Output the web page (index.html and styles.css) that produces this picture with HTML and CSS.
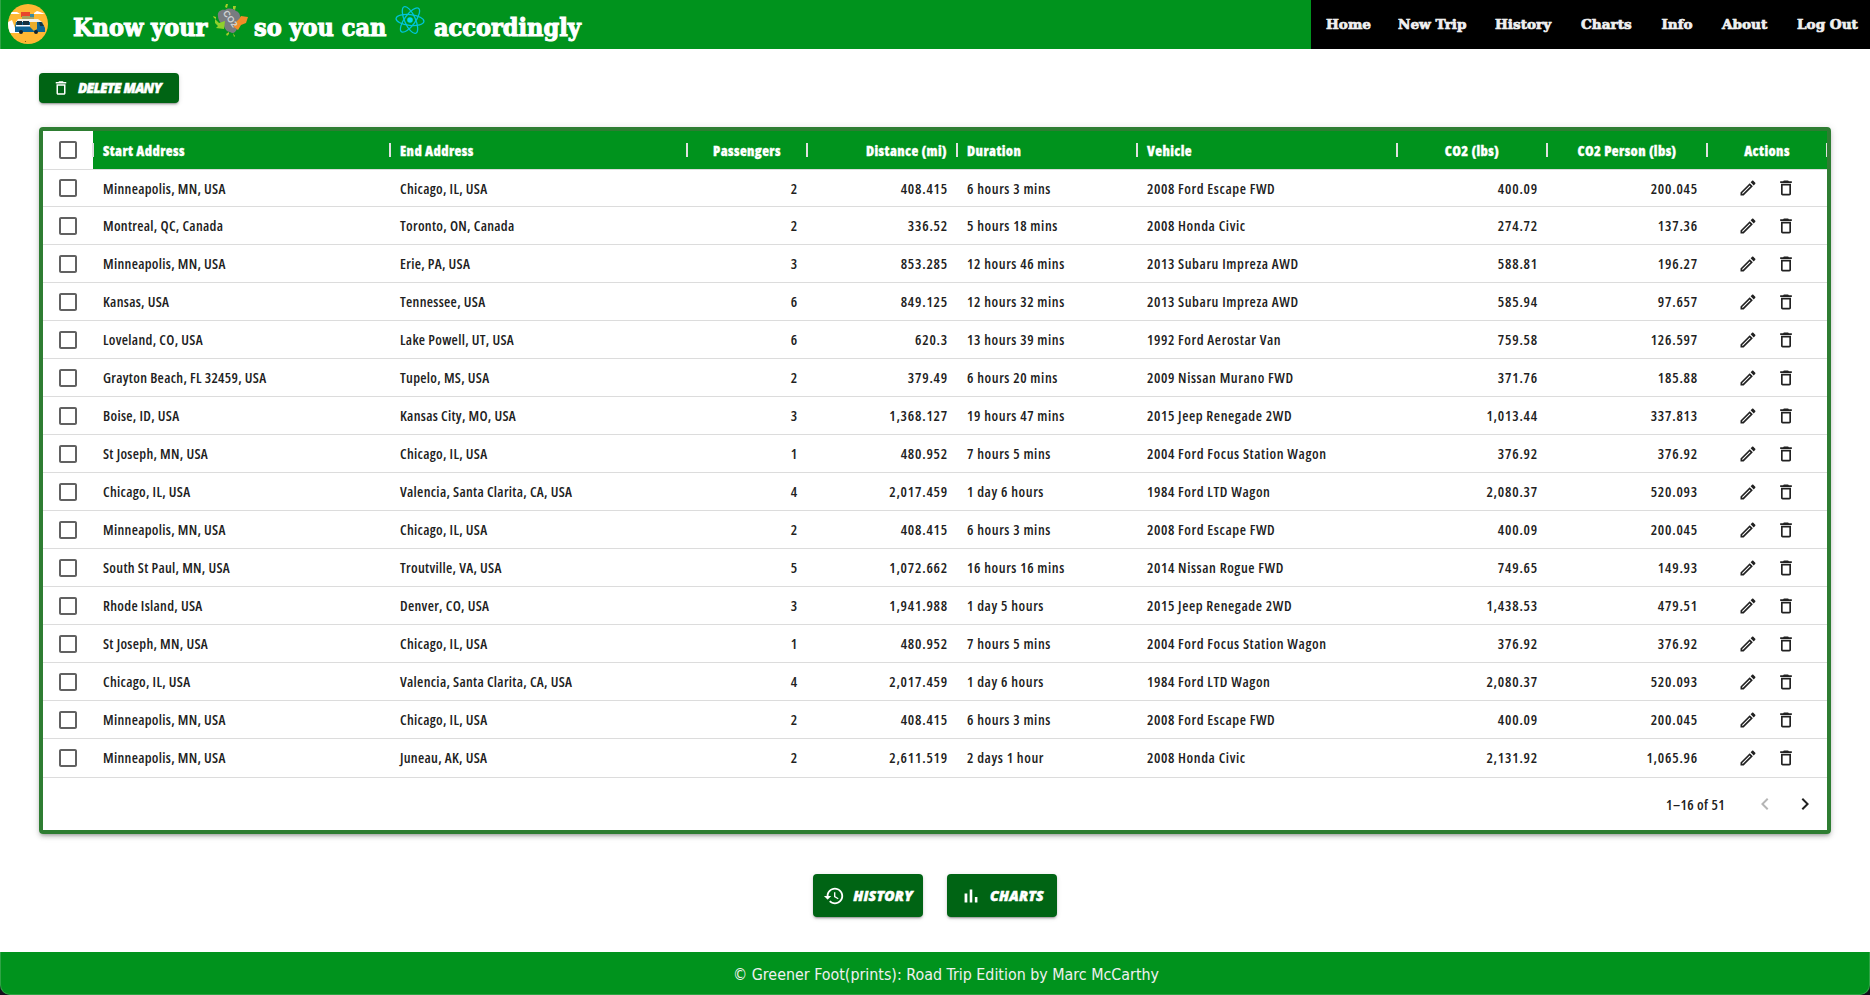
FILE: index.html
```
<!DOCTYPE html>
<html lang="en">
<head>
<meta charset="utf-8">
<title>Greener Foot(prints): Road Trip Edition</title>
<link rel="stylesheet" href="styles.css">
</head>
<body>
<svg class="sprite" aria-hidden="true">
  <symbol id="box" viewBox="0 0 24 24"><path d="M19 5v14H5V5h14m0-2H5c-1.1 0-2 .9-2 2v14c0 1.1.9 2 2 2h14c1.1 0 2-.9 2-2V5c0-1.1-.9-2-2-2z"/></symbol>
  <symbol id="edit" viewBox="0 0 24 24"><path d="M14.06 9.02l.92.92L5.92 19H5v-.92l9.06-9.06M17.66 3c-.25 0-.51.1-.7.29l-1.83 1.83 3.75 3.75 1.83-1.83c.39-.39.39-1.02 0-1.41l-2.34-2.34c-.2-.2-.45-.29-.71-.29zm-3.6 3.19L3 17.25V21h3.75L17.81 9.94l-3.75-3.75z"/></symbol>
  <symbol id="trash" viewBox="0 0 24 24"><path d="M6 19c0 1.1.9 2 2 2h8c1.1 0 2-.9 2-2V7H6v12zM8 9h8v10H8V9zm7.5-5l-1-1h-5l-1 1H5v2h14V4h-3.5z"/></symbol>
  <symbol id="history" viewBox="0 0 24 24"><path d="M13 3c-4.97 0-9 4.03-9 9H1l3.89 3.89.07.14L9 12H6c0-3.87 3.13-7 7-7s7 3.13 7 7-3.13 7-7 7c-1.93 0-3.68-.79-4.94-2.06l-1.42 1.42C8.27 19.99 10.51 21 13 21c4.97 0 9-4.03 9-9s-4.03-9-9-9zm-1 5v5l4.28 2.54.72-1.21-3.5-2.08V8H12z"/></symbol>
  <symbol id="bars" viewBox="0 0 24 24"><path d="M5 9.2h3V19H5zM10.6 5h2.8v14h-2.8zM16.2 13H19v6h-2.8z"/></symbol>
  <symbol id="left" viewBox="0 0 24 24"><path d="M15.41 7.41L14 6l-6 6 6 6 1.41-1.41L10.83 12z"/></symbol>
  <symbol id="right" viewBox="0 0 24 24"><path d="M10 6L8.59 7.41 13.17 12l-4.58 4.59L10 18l6-6z"/></symbol>
</svg>

<header class="topbar">
  <svg class="logo" viewBox="0 0 40 40">
    <defs><clipPath id="round"><circle cx="20" cy="20" r="20"/></clipPath></defs>
    <g clip-path="url(#round)">
      <rect width="40" height="40" fill="#ffb833"/>
      <path d="M0 8h9l3 2H0zM26 9l3-2 3 1 5 2h-11zM0 18l4-2 3 8 5 5H0z" fill="#fff"/>
      <path d="M13 8h9v5h-9z" fill="#e8452c"/>
      <path d="M14 12h12v3H14z" fill="#a8a25c"/>
      <path d="M22 10h4v3h-4z" fill="#3d8aa0"/>
      <path d="M10 15h20l4 3H8z" fill="#f4f1e8"/>
      <path d="M8 18h26l3 6v4H7v-5z" fill="#0d6394"/>
      <path d="M9 17h5v4H9zM15 17h6v4h-6zM31 18h2l3 4h-4z" fill="#16323f"/>
      <path d="M8 21h14v1.500H8z" fill="#fff"/>
      <path d="M22 18h7v7l-3 2-4-4z" fill="#e8ac2c"/>
      <circle cx="13" cy="28" r="2" fill="#12242e"/><circle cx="28" cy="28" r="2" fill="#12242e"/>
      <circle cx="17.500" cy="37.500" r=".6" fill="#6b4a12"/>
    </g>
  </svg>
  <h1 class="title">
    <span>Know your</span>
    <svg class="co2" viewBox="0 0 36 34">
      <path d="M14 1l2 0-1 4-2-1zM21 3l3 0-1 4-2-1zM1 13l3 1 0 2-2-1zM14 31l3-2 0 2-2 2zM21 30l2 3-1 1z" fill="#a4cf2b"/>
      <path d="M6 13c-1-5 4-7 7-6 4-3 9-1 11 1 4 1 5 6 3 9 0 3 1 6-2 9-2 4-4 5-7 3-3 0-5-3-6-6-3-2-6-6-6-10z" fill="#787c80"/>
      <path d="M3 16l4 4 6-2-1 8-8-1 2-2-3-3z" fill="#8fd12c"/>
      <path d="M22 21l5-5 2-3 7 1-2 6-5 2-3 5-4-3z" fill="#f28c28"/>
      <text class="gas" transform="translate(10.500 10) rotate(55)">CO2</text>
    </svg>
    <span>so you can</span>
    <svg class="react" viewBox="0 0 30 32">
      <g fill="none" stroke="#00c4dc" stroke-width="1.3">
        <ellipse cx="15" cy="16" rx="14" ry="5.400" transform="rotate(6 15 16)"/>
        <ellipse cx="15" cy="16" rx="14.500" ry="5.400" transform="rotate(66 15 16)"/>
        <ellipse cx="15" cy="16" rx="14.500" ry="5.400" transform="rotate(126 15 16)"/>
      </g>
      <circle cx="15" cy="16" r="2.800" fill="#00d8f0"/>
    </svg>
    <span>accordingly</span>
  </h1>
  <nav class="nav">
    <a>Home</a><a>New Trip</a><a>History</a><a>Charts</a><a>Info</a><a>About</a><a>Log Out</a>
  </nav>
</header>

<main class="page">
  <button class="btn btn-small"><svg class="icon"><use href="#trash"/></svg><span>DELETE MANY</span></button>

  <section class="grid">
    <div class="row head">
      <div class="check"><svg class="box"><use href="#box"/></svg></div>
      <div>Start Address</div><div>End Address</div><div class="mid">Passengers</div>
      <div class="end">Distance (mi)</div><div>Duration</div><div>Vehicle</div>
      <div class="mid">CO2 (lbs)</div><div class="mid">CO2 Person (lbs)</div><div class="mid">Actions</div>
    </div>
    <div id="rows"></div>
    <div class="pager">
      <span>1–16 of 51</span>
      <svg class="arrow off"><use href="#left"/></svg>
      <svg class="arrow"><use href="#right"/></svg>
    </div>
  </section>

  <div class="links">
    <button class="btn"><svg class="icon"><use href="#history"/></svg><span>HISTORY</span></button>
    <button class="btn"><svg class="icon"><use href="#bars"/></svg><span>CHARTS</span></button>
  </div>
</main>

<footer class="footer"><p>© Greener Foot(prints): Road Trip Edition by Marc McCarthy</p></footer>
<script src="main.js"></script>
</body>
</html>
```
FILE: styles.css
```
* { box-sizing: border-box; }
body {
  margin: 0;
  height: 995px;
  display: flex;
  flex-direction: column;
  background: #fff;
  overflow: hidden;
}
.sprite { position: absolute; width: 0; height: 0; }

.topbar { display: flex; height: 49px; background: #00931d; border-left: 1px solid #2fa345; }
.logo { width: 40px; height: 40px; margin: 4px 0 0 7px; }
.title {
  display: grid;
  grid-template-columns: 139px 42px 141px 39px auto;
  margin: 0 0 0 25px;
  color: #fff;
  font: 700 25px/49px "DejaVu Serif Condensed", "DejaVu Serif", serif;
  font-stretch: 75%;
  white-space: nowrap;
  -webkit-text-stroke: 1px #fff;
}
.title span { padding-top: 3px; }
.title svg { -webkit-text-stroke: 0; }
.co2 { width: 36px; height: 34px; margin-top: 3px; }
.gas { fill: #d0d3d5; font: 700 9px "Liberation Sans", sans-serif; }
.react { width: 30px; height: 32px; margin-top: 4px; }
.nav {
  display: grid;
  grid-template-columns: 72px 97px 86px 80.5px 60.5px 75px auto;
  width: 559px;
  margin-left: auto;
  padding-left: 15px;
  background: #000;
  color: #f0f0f0;
  font: 700 13.6px/49px "DejaVu Serif", serif;
  -webkit-text-stroke: .7px #f0f0f0;
  white-space: nowrap;
}

.page { flex: 1; padding: 24px 39px 0; }
.btn {
  display: flex;
  align-items: center;
  justify-content: center;
  gap: 8px;
  width: 110px;
  height: 43px;
  padding: 0;
  border: 0;
  border-radius: 4px;
  background: #006414;
  color: #fff;
  font: italic 800 14px/20px "Open Sans", sans-serif;
  letter-spacing: .2px;
  -webkit-text-stroke: .5px #fff;
  white-space: nowrap;
  box-shadow: 0 3px 1px -2px rgba(0,0,0,.2), 0 2px 2px rgba(0,0,0,.14), 0 1px 5px rgba(0,0,0,.12);
}
.btn .icon { flex: none; width: 22px; height: 22px; fill: #fff; -webkit-text-stroke: 0; }
.btn-small {
  justify-content: flex-start;
  width: 140px;
  height: 30px;
  padding-left: 13px;
  font-size: 13.5px;
  letter-spacing: -.65px;
}
.btn-small .icon { width: 18px; height: 18px; }

.grid {
  height: 707px;
  margin-top: 24px;
  border: 4px solid #2e7d32;
  border-radius: 4px;
  color: #212121;
  font: 600 14.3px/38px "Open Sans", sans-serif;
  font-stretch: 75%;
  box-shadow: 0 3px 3px -2px rgba(0,0,0,.2), 0 3px 4px rgba(0,0,0,.14), 0 1px 8px rgba(0,0,0,.12);
}
.row {
  display: grid;
  grid-template-columns: 50px 297px 297px 120px 150px 180px 260px 150px 160px 120px;
  grid-template-rows: 37px;
  height: 38px;
  border-bottom: 1px solid #dcdcdc;
  white-space: nowrap;
}
.row > div { padding: 0 10px; letter-spacing: .3px; }
#rows .row:first-child { height: 37px; grid-template-rows: 36px; line-height: 37px; }
#rows .row:last-child { border-bottom: 0; }
.row .num { padding-right: 9px; text-align: right; letter-spacing: .8px; }
.row .text { letter-spacing: .58px; }
.row .check { display: grid; place-items: center; padding: 0; }
.box { width: 24px; height: 24px; fill: #616161; }
.row .tools { display: flex; justify-content: center; align-items: center; gap: 18px; }
.tools svg { width: 20px; height: 20px; fill: #212121; }

.head { height: 39px; grid-template-rows: 38px; color: #fff; font-weight: 800; font-size: 14px; line-height: 39px; }
.head > div { background: #00931d; letter-spacing: .4px; -webkit-text-stroke: .3px #fff; }
.head > .check { background: #fff; }
.head > div::after {
  content: "";
  float: right;
  width: 2px;
  height: 14px;
  margin: 12px -11px 0 0;
  background: #e0e0e0;
  position: relative;
}
.head > .check { grid-template: 38px / 50px; }
.head > .check > *, .head > .check::after { grid-area: 1 / 1; }
.head > .check::after { justify-self: end; align-self: start; margin-right: -1px; }
.head > div:last-child::after { margin-right: -10px; width: 1px; }
.head .mid { text-align: center; }
.head .end { text-align: right; }

.pager {
  display: flex;
  align-items: center;
  justify-content: flex-end;
  height: 53px;
  padding: 0 10px 0 0;
  border-top: 1px solid #dcdcdc;
}
.pager span { margin: 2px 28px 0 0; letter-spacing: .4px; }
.arrow { width: 24px; height: 24px; fill: #212121; }
.arrow + .arrow { margin-left: 16px; }
.arrow.off { fill: #b5b5b5; }

.links { display: flex; justify-content: center; gap: 24px; margin-top: 40px; }

.footer { height: 43px; background: #14101c; }
.footer p {
  height: 43px;
  margin: 0;
  padding-left: 22px;
  border: 1px solid #2fa345;
  border-top: 0;
  border-radius: 0 0 10px 10px;
  background: #00931d;
  color: #f0f0f0;
  text-align: center;
  font: 15.86px/46px "DejaVu Sans Condensed", "DejaVu Sans", sans-serif;
}
```
FILE: main.js
```
const trips = [
  ["Minneapolis, MN, USA", "Chicago, IL, USA", "2", "408.415", "6 hours 3 mins", "2008 Ford Escape FWD", "400.09", "200.045"],
  ["Montreal, QC, Canada", "Toronto, ON, Canada", "2", "336.52", "5 hours 18 mins", "2008 Honda Civic", "274.72", "137.36"],
  ["Minneapolis, MN, USA", "Erie, PA, USA", "3", "853.285", "12 hours 46 mins", "2013 Subaru Impreza AWD", "588.81", "196.27"],
  ["Kansas, USA", "Tennessee, USA", "6", "849.125", "12 hours 32 mins", "2013 Subaru Impreza AWD", "585.94", "97.657"],
  ["Loveland, CO, USA", "Lake Powell, UT, USA", "6", "620.3", "13 hours 39 mins", "1992 Ford Aerostar Van", "759.58", "126.597"],
  ["Grayton Beach, FL 32459, USA", "Tupelo, MS, USA", "2", "379.49", "6 hours 20 mins", "2009 Nissan Murano FWD", "371.76", "185.88"],
  ["Boise, ID, USA", "Kansas City, MO, USA", "3", "1,368.127", "19 hours 47 mins", "2015 Jeep Renegade 2WD", "1,013.44", "337.813"],
  ["St Joseph, MN, USA", "Chicago, IL, USA", "1", "480.952", "7 hours 5 mins", "2004 Ford Focus Station Wagon", "376.92", "376.92"],
  ["Chicago, IL, USA", "Valencia, Santa Clarita, CA, USA", "4", "2,017.459", "1 day 6 hours", "1984 Ford LTD Wagon", "2,080.37", "520.093"],
  ["Minneapolis, MN, USA", "Chicago, IL, USA", "2", "408.415", "6 hours 3 mins", "2008 Ford Escape FWD", "400.09", "200.045"],
  ["South St Paul, MN, USA", "Troutville, VA, USA", "5", "1,072.662", "16 hours 16 mins", "2014 Nissan Rogue FWD", "749.65", "149.93"],
  ["Rhode Island, USA", "Denver, CO, USA", "3", "1,941.988", "1 day 5 hours", "2015 Jeep Renegade 2WD", "1,438.53", "479.51"],
  ["St Joseph, MN, USA", "Chicago, IL, USA", "1", "480.952", "7 hours 5 mins", "2004 Ford Focus Station Wagon", "376.92", "376.92"],
  ["Chicago, IL, USA", "Valencia, Santa Clarita, CA, USA", "4", "2,017.459", "1 day 6 hours", "1984 Ford LTD Wagon", "2,080.37", "520.093"],
  ["Minneapolis, MN, USA", "Chicago, IL, USA", "2", "408.415", "6 hours 3 mins", "2008 Ford Escape FWD", "400.09", "200.045"],
  ["Minneapolis, MN, USA", "Juneau, AK, USA", "2", "2,611.519", "2 days 1 hour", "2008 Honda Civic", "2,131.92", "1,065.96"]
];
const kinds = ["place", "place", "num", "num", "text", "text", "num", "num"];
document.getElementById("rows").innerHTML = trips.map(trip =>
  `<div class="row"><div class="check"><svg class="box"><use href="#box"/></svg></div>` +
  trip.map((value, i) => `<div class="${kinds[i]}">${value}</div>`).join("") +
  `<div class="tools"><svg><use href="#edit"/></svg><svg><use href="#trash"/></svg></div></div>`
).join("");
```
